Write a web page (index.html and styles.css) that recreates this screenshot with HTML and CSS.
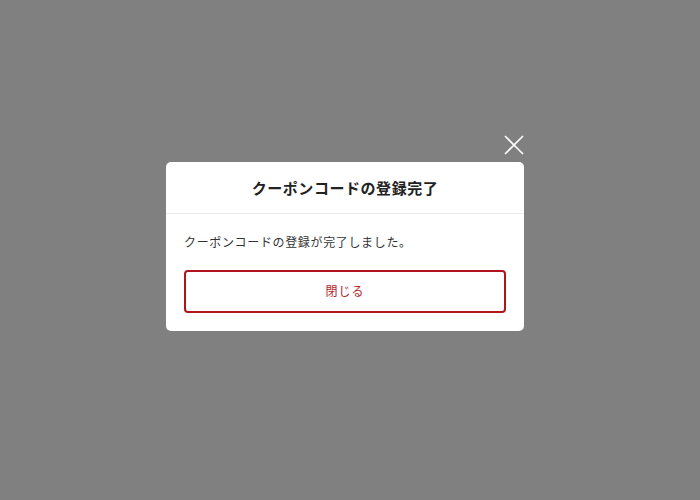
FILE: index.html
```html
<!DOCTYPE html>
<html lang="ja">
<head>
<meta charset="utf-8">
<link rel="stylesheet" href="styles.css">
</head>
<body>
<div class="overlay">
  <div class="modal">
    <button class="close" aria-label="close">
      <svg width="22" height="22" viewBox="0 0 22 22"><path d="M2 2 L20 20 M20 2 L2 20" stroke="#fff" stroke-width="1.6" fill="none"/></svg>
    </button>
    <div class="modal-header">クーポンコードの登録完了</div>
    <div class="modal-body">
      <p class="message">クーポンコードの登録が完了しました。</p>
      <button class="btn-close">閉じる</button>
    </div>
  </div>
</div>
</body>
</html>
```

FILE: styles.css
```css
html, body {
  margin: 0;
  padding: 0;
  width: 700px;
  height: 500px;
  background: #808080;
  font-family: "Noto Sans CJK JP", "Noto Sans", sans-serif;
}
.overlay {
  padding-top: 162px;
  padding-left: 166px;
}
.modal {
  position: relative;
  width: 358px;
  background: #fff;
  border-radius: 5px;
}
.close {
  position: absolute;
  right: -1px;
  top: -28px;
  width: 22px;
  height: 22px;
  padding: 0;
  border: 0;
  background: transparent;
  display: block;
}
.close svg { display: block; }
.modal-header {
  height: 51px;
  display: flex;
  align-items: center;
  justify-content: center;
  font-size: 15px;
  font-weight: bold;
  letter-spacing: 0.55px;
  color: #222;
  border-bottom: 1px solid #ececec;
}
.modal-body {
  padding: 18px 18px 18px;
}
.message {
  margin: 0 0 18px;
  font-size: 12px;
  line-height: 20px;
  letter-spacing: 0.65px;
  color: #333;
}
.btn-close {
  display: block;
  width: 100%;
  height: 43px;
  padding: 0 0 2px;
  background: #fff;
  border: 2px solid #b0141c;
  border-radius: 4px;
  color: #b3242b;
  font-family: inherit;
  font-size: 12px;
  letter-spacing: 1px;
}
```
